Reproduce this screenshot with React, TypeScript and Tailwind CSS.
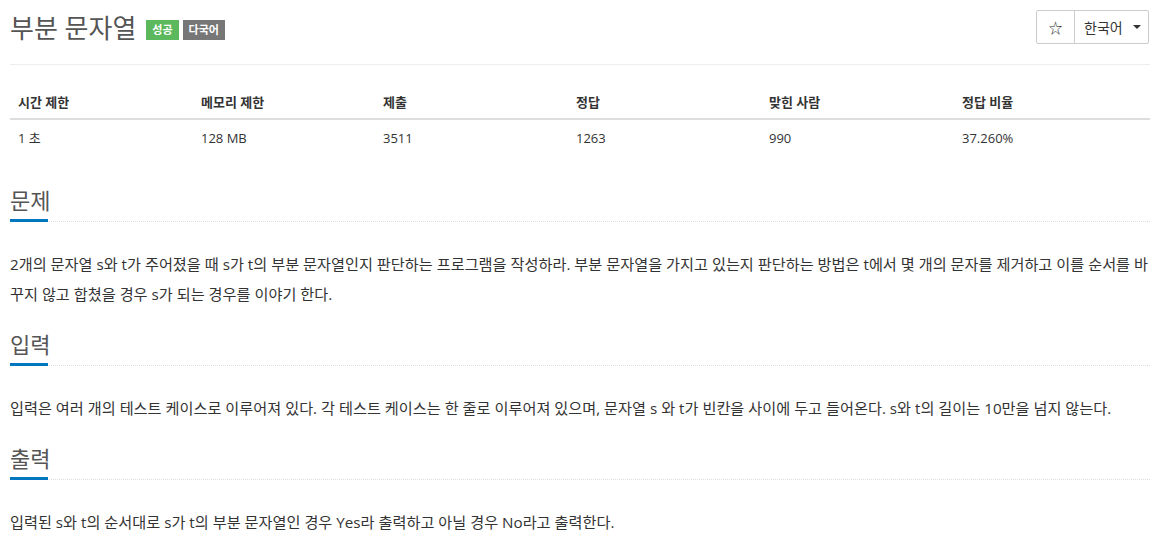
import React from "react";

const font = { fontFamily: '"Open Sans", "Noto Sans CJK KR", sans-serif' };

function Section({ title, children }: { title: string; children: React.ReactNode }) {
  return (
    <section>
      <div className="relative border-b border-dotted border-[#ddd] pb-[6px]">
        <h2 className="text-[22px] leading-[30px] text-[#555] font-normal">{title}</h2>
        <div className="absolute left-0 bottom-[-1px] w-[38px] h-[3px] bg-[#0076c0]" />
      </div>
      <p className="mt-[27px] text-[15.2px] leading-[30px] text-[#333]">{children}</p>
    </section>
  );
}

export default function App() {
  const heads = ["시간 제한", "메모리 제한", "제출", "정답", "맞힌 사람", "정답 비율"];
  const vals = ["1 초", "128 MB", "3511", "1263", "990", "37.260%"];
  return (
    <div className="bg-white w-[1161px] h-[556px] overflow-hidden px-[10px]" style={font}>
      <div className="w-[1140px]">
        <div className="flex items-start justify-between pt-[10px] pb-[20px] border-b border-[#eee]">
          <div className="flex items-center gap-[4px] pt-[2px]">
            <h1 className="text-[26px] leading-[32px] text-[#555] font-normal mr-[6px]">부분 문자열</h1>
            <span className="mt-[4px] bg-[#5cb85c] text-white text-[11px] font-semibold px-[6px] h-[20px] leading-[20px]">성공</span>
            <span className="mt-[4px] bg-[#777] text-white text-[11px] font-semibold px-[6px] h-[20px] leading-[20px]">다국어</span>
          </div>
          <div className="flex h-[34px] border border-[#ccc] rounded-[2px] mr-[1px]">
            <div className="w-[38px] flex items-center justify-center border-r border-[#ccc] text-[#333] text-[14px]">☆</div>
            <div className="w-[73px] flex items-center pl-[9px] gap-[10px] text-[#333] text-[14px]">
              <span>한국어</span>
              <svg width="8" height="4" viewBox="0 0 8 4"><path d="M0 0h8L4 4z" fill="#333" /></svg>
            </div>
          </div>
        </div>

        <div className="mt-[19px] grid grid-cols-[183px_182px_193px_193px_193px_1fr] text-[13px] text-[#333]">
          {heads.map((h) => (
            <div key={h} className="px-[8px] pt-[8px] pb-[6px] leading-[20px] font-bold border-b-2 border-[#ddd]">{h}</div>
          ))}
          {vals.map((v) => (
            <div key={v} className="px-[8px] py-[8px] leading-[20px]">{v}</div>
          ))}
        </div>

        <div className="mt-[29px] flex flex-col gap-[20px]">
          <Section title="문제">
            2개의 문자열 s와 t가 주어졌을 때 s가 t의 부분 문자열인지 판단하는 프로그램을 작성하라. 부분 문자열을 가지고 있는지 판단하는 방법은 t에서 몇 개의 문자를 제거하고 이를 순서를 바꾸지 않고 합쳤을 경우 s가 되는 경우를 이야기 한다.
          </Section>
          <Section title="입력">
            입력은 여러 개의 테스트 케이스로 이루어져 있다. 각 테스트 케이스는 한 줄로 이루어져 있으며, 문자열 s 와 t가 빈칸을 사이에 두고 들어온다. s와 t의 길이는 10만을 넘지 않는다.
          </Section>
          <Section title="출력">
            입력된 s와 t의 순서대로 s가 t의 부분 문자열인 경우 Yes라 출력하고 아닐 경우 No라고 출력한다.
          </Section>
        </div>
      </div>
    </div>
  );
}
